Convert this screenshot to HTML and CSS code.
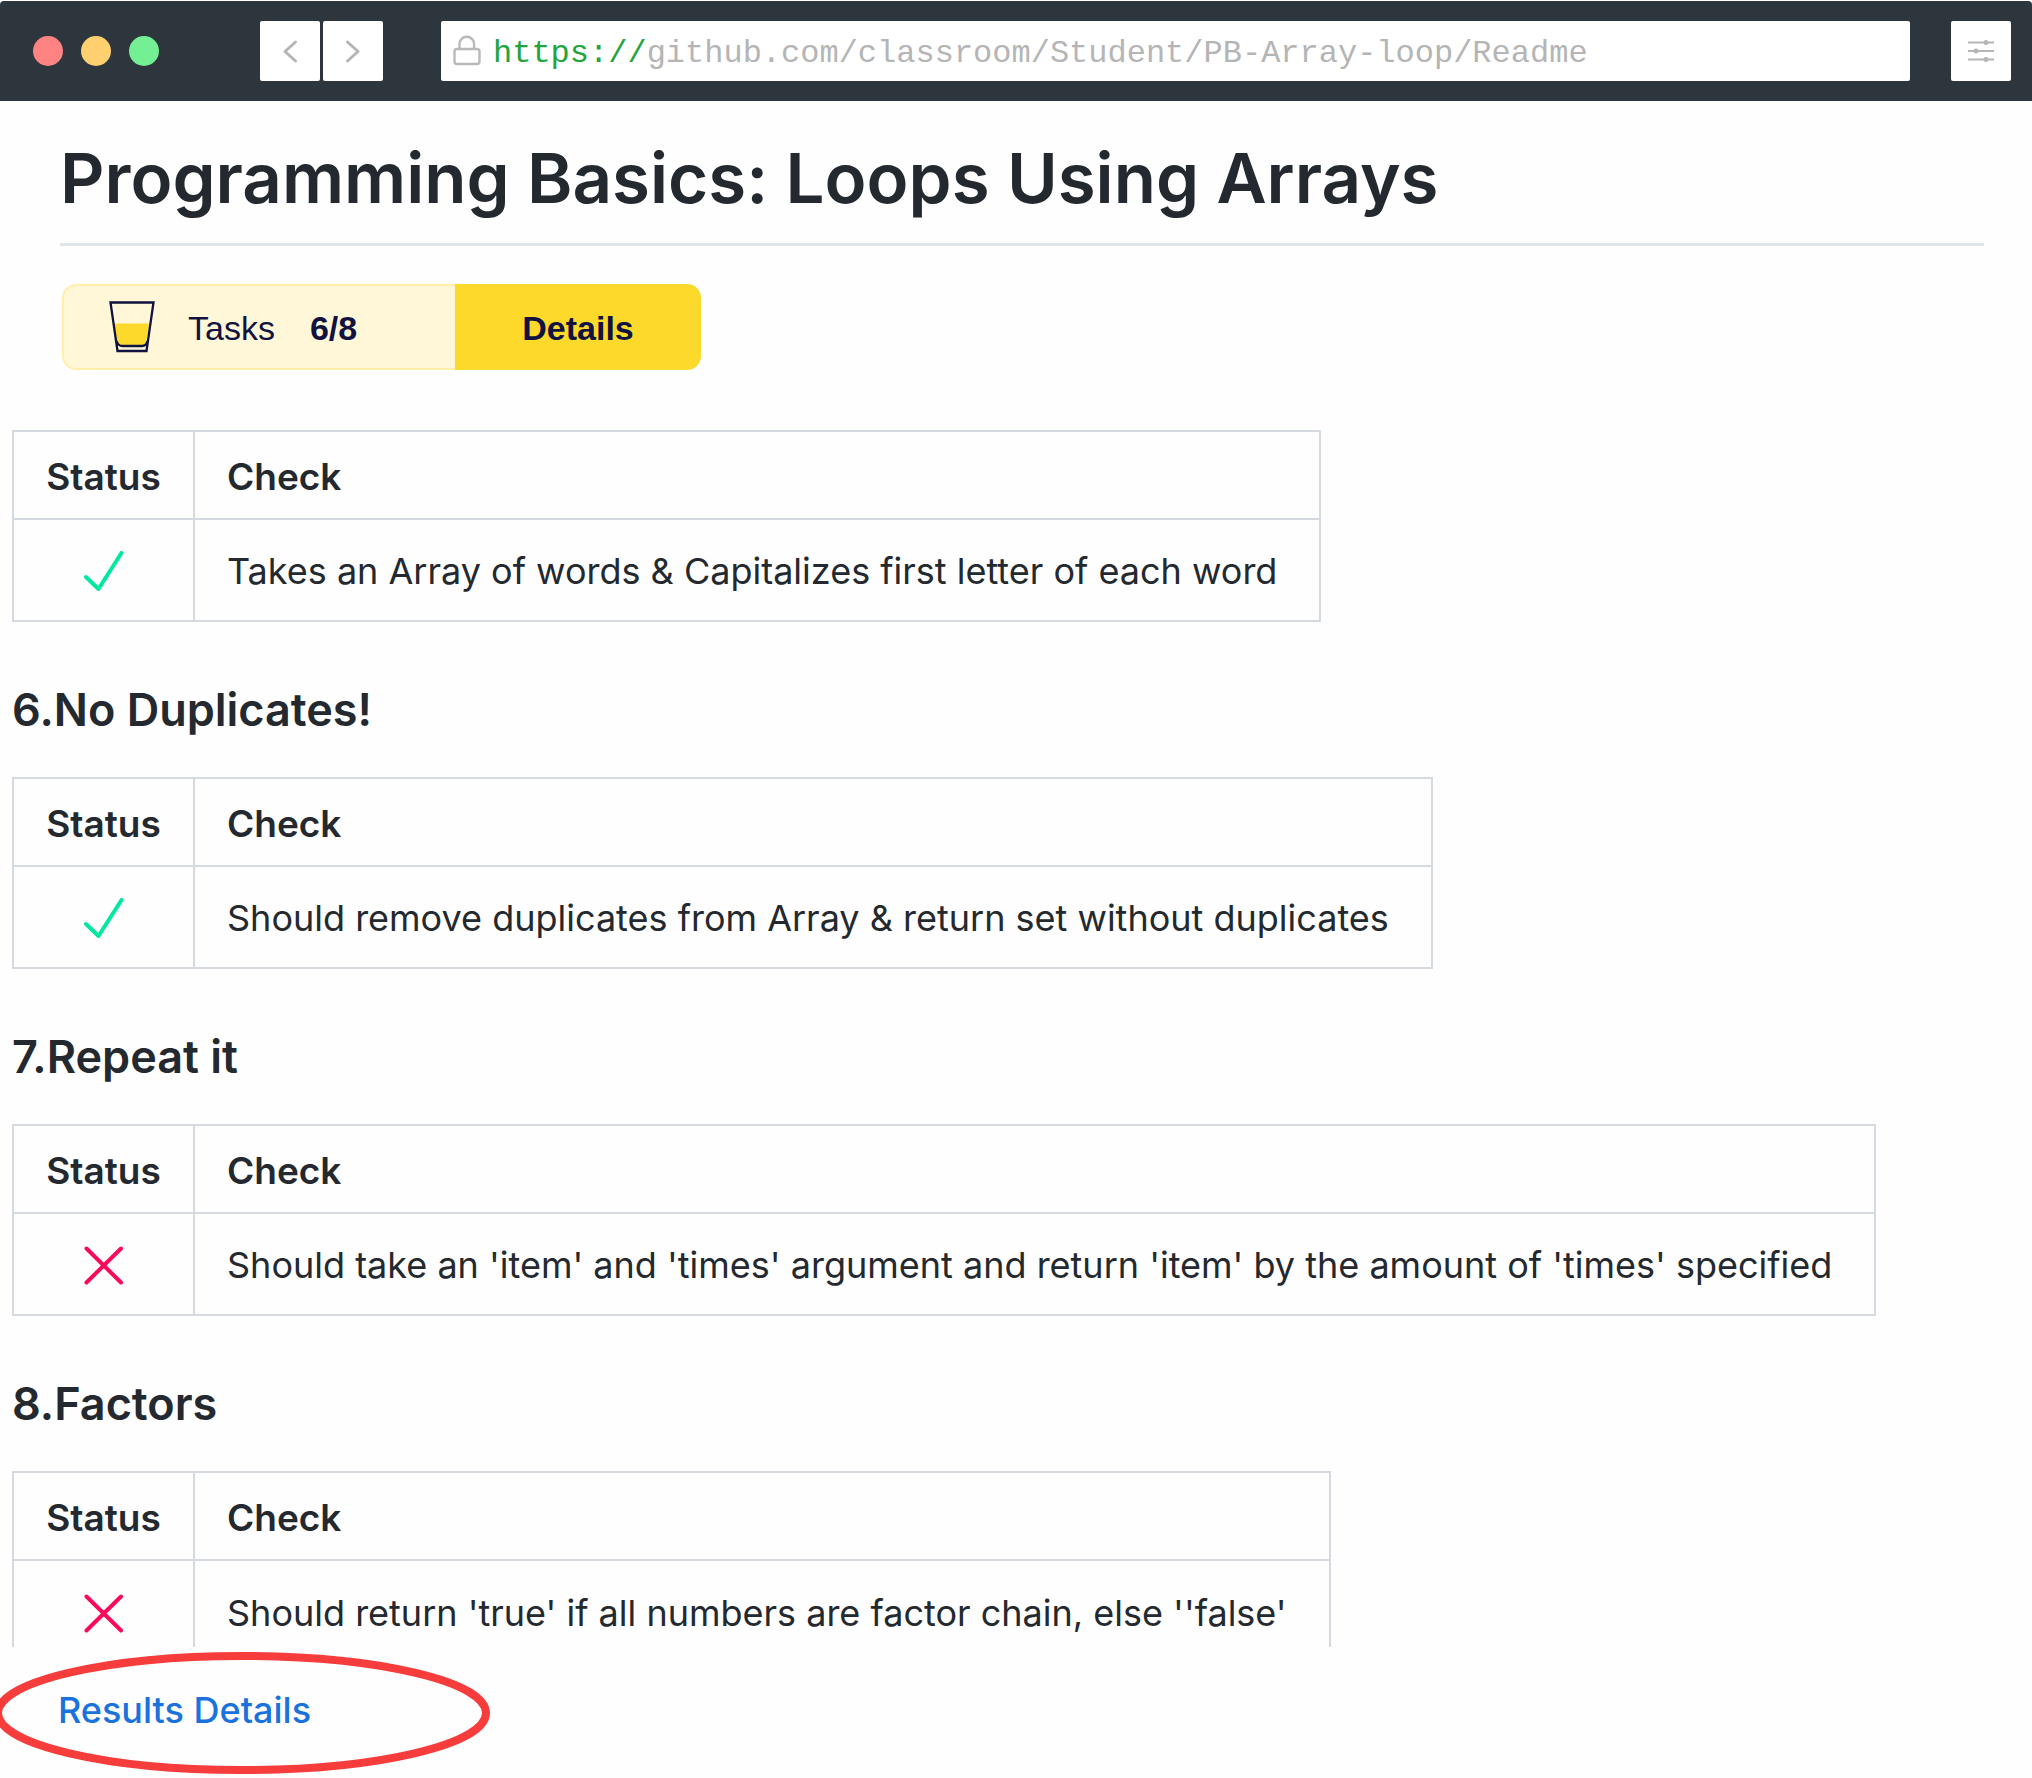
FILE: index.html
```html
<!DOCTYPE html>
<html lang="en">
<head>
<meta charset="utf-8">
<title>Programming Basics: Loops Using Arrays</title>
<link rel="stylesheet" href="styles.css">
</head>
<body>
<header class="toolbar">
  <div class="lights">
    <span class="light light-red"></span>
    <span class="light light-yellow"></span>
    <span class="light light-green"></span>
  </div>
  <nav class="history">
    <button class="tool-button" type="button" aria-label="Back">
      <svg width="60" height="60" viewBox="0 0 60 60"><path d="M35.500 21L25 30.500L35.500 40"/></svg>
    </button>
    <button class="tool-button" type="button" aria-label="Forward">
      <svg width="60" height="60" viewBox="0 0 60 60"><path d="M24.500 21L35 30.500L24.500 40"/></svg>
    </button>
  </nav>
  <div class="address">
    <svg class="lock" width="28" height="32" viewBox="0 0 28 32"><rect x="1.500" y="14" width="25" height="15" rx="2.500"/><path d="M6.500 14V9a7.300 7.300 0 0 1 14.600 0v5"/></svg>
    <label class="scheme" for="url">https://</label>
    <input class="url" id="url" type="text" value="github.com/classroom/Student/PB-Array-loop/Readme">
  </div>
  <button class="tool-button" type="button" aria-label="Settings">
    <svg width="60" height="60" viewBox="0 0 60 60"><path class="thin" d="M17 21.500H43M17 30H43M17 38.500H43"/><g class="knobs"><circle cx="35" cy="21.500" r="2.500"/><circle cx="25" cy="30" r="2.500"/><circle cx="35" cy="38.500" r="2.500"/></g></svg>
  </button>
</header>

<main>
  <div class="intro">
    <h1>Programming Basics: Loops Using Arrays</h1>
    <div class="badge">
      <div class="badge-tasks">
        <svg width="48" height="54" viewBox="0 0 48 54"><path d="M6 23.500H41.500L38 43q-1 4-5 4H15q-4 0-6-5Z" fill="#fcd92b"/><path d="M2.500 2.500H45.500L38.500 51H9.500ZM8.500 41q1.500 5 6 5H34q4.500 0 5.500-5" fill="none" stroke="#10123f" stroke-width="2.300"/></svg>
        <span>Tasks</span>
        <b>6/8</b>
      </div>
      <button class="badge-details" type="button">Details</button>
    </div>
  </div>

  <section>
    <table>
      <thead><tr><th>Status</th><th>Check</th></tr></thead>
      <tbody><tr>
        <td><svg class="mark pass" width="40" height="40" viewBox="0 0 40 40" role="img" aria-label="Passed"><path d="M2 26L14.500 38L37.500 2"/></svg></td>
        <td>Takes an Array of words &amp; Capitalizes first letter of each word</td>
      </tr></tbody>
    </table>
  </section>

  <section>
    <h2>6.No Duplicates!</h2>
    <table>
      <thead><tr><th>Status</th><th>Check</th></tr></thead>
      <tbody><tr>
        <td><svg class="mark pass" width="40" height="40" viewBox="0 0 40 40" role="img" aria-label="Passed"><path d="M2 26L14.500 38L37.500 2"/></svg></td>
        <td>Should remove duplicates from Array &amp; return set without duplicates</td>
      </tr></tbody>
    </table>
  </section>

  <section>
    <h2>7.Repeat it</h2>
    <table>
      <thead><tr><th>Status</th><th>Check</th></tr></thead>
      <tbody><tr>
        <td><svg class="mark fail" width="40" height="40" viewBox="0 0 40 40" role="img" aria-label="Failed"><path d="M2.500 3.500L37 37.500M37 3.500L2.500 37.500"/></svg></td>
        <td>Should take an 'item' and 'times' argument and return 'item' by the amount of 'times' specified</td>
      </tr></tbody>
    </table>
  </section>

  <section>
    <h2>8.Factors</h2>
    <table class="open-ended">
      <thead><tr><th>Status</th><th>Check</th></tr></thead>
      <tbody><tr>
        <td><svg class="mark fail" width="40" height="40" viewBox="0 0 40 40" role="img" aria-label="Failed"><path d="M2.500 3.500L37 37.500M37 3.500L2.500 37.500"/></svg></td>
        <td>Should return 'true' if all numbers are factor chain, else ''false'</td>
      </tr></tbody>
    </table>
  </section>

  <footer class="results">
    <a href="#results">Results Details</a>
    <svg class="ring" width="500" height="126" viewBox="0 0 500 126"><ellipse cx="250" cy="63" rx="244" ry="57"/></svg>
  </footer>
</main>
</body>
</html>
```

FILE: styles.css
```css
* { box-sizing: border-box; }

body {
  margin: 0;
  padding-top: 1px;
  background: #fefefe;
  color: #24292f;
  font-family: Inter, "Liberation Sans", sans-serif;
  font-size: 36px;
  overflow-x: hidden;
}

button, input { font: inherit; border: 0; padding: 0; }

/* browser bar */
.toolbar {
  display: flex;
  align-items: center;
  height: 100px;
  padding: 0 21px 0 33px;
  background: #2d363c;
  border-radius: 4px 4px 0 0;
}
.lights { display: flex; gap: 18px; margin-right: 101px; }
.light { width: 30px; height: 30px; border-radius: 50%; }
.light-red { background: #ff8383; }
.light-yellow { background: #ffcf70; }
.light-green { background: #75ef94; }

.history { display: flex; gap: 3px; margin-right: 58px; }
.tool-button {
  display: block;
  width: 60px;
  height: 60px;
  background: #fff;
  border-radius: 2px;
}
.tool-button svg {
  display: block;
  fill: none;
  stroke: #b5b5b5;
  stroke-width: 3;
  stroke-linecap: round;
  stroke-linejoin: round;
}
.tool-button .thin { stroke-width: 2; stroke-linecap: butt; }
.tool-button .knobs { fill: #b5b5b5; stroke: none; }

.address {
  display: flex;
  flex: 1;
  align-items: center;
  height: 60px;
  margin-right: 41px;
  padding-left: 12px;
  background: #fff;
  border-radius: 2px;
  font-family: "Courier New", "Liberation Mono", monospace;
  font-size: 32px;
}
.lock { margin-right: 12px; fill: none; stroke: #b9b9b9; stroke-width: 2.4; }
.scheme, .url { padding-top: 4px; }
.scheme { color: #23a43c; }
.url { flex: 1; min-width: 0; background: none; color: #b5b5b5; }

/* title and badge */
.intro { padding: 32px 48px 0 60px; }
h1 {
  margin: 0 0 38px;
  padding-bottom: 20px;
  border-bottom: 3px solid #dfe5e8;
  font-size: 69px;
  font-weight: 600;
  line-height: 90px;
}
.badge {
  display: flex;
  width: max-content;
  height: 86px;
  margin-left: 2px;
  border-radius: 14px;
  overflow: hidden;
  color: #10123f;
  font-family: "Liberation Sans", Arial, sans-serif;
  font-size: 34px;
}
.badge-tasks {
  display: flex;
  align-items: center;
  width: 393px;
  padding-left: 44px;
  background: #fff7d8;
  border: 2px solid #ffefa8;
  border-right: 0;
  border-radius: 14px 0 0 14px;
}
.badge-tasks span { margin: 0 35px 0 32px; }
.badge-tasks span, .badge-tasks b, .badge-details { padding-top: 2px; }
.badge-details { width: 246px; background: #fcd92b; color: inherit; font-weight: 700; }

/* check tables */
section { padding-left: 12px; }
.intro + section { padding-top: 60px; }
h2 {
  margin: 0;
  padding: 58px 0 37px;
  font-size: 45px;
  font-weight: 600;
  line-height: 60px;
}
table { border-collapse: separate; border-spacing: 0; border: solid #d4dae0; border-width: 2px 0 0 2px; }
th, td {
  padding: 2px 42px 0 32px;
  border: solid #d4dae0;
  border-width: 0 2px 2px 0;
  text-align: left;
  white-space: nowrap;
}
th { height: 88px; font-size: 37px; font-weight: 600; }
td { height: 102px; }
th:first-child, td:first-child { width: 181px; padding: 2px 0 0; text-align: center; }
.open-ended td, .open-ended td:first-child { height: 86px; padding-top: 18px; border-bottom: 0; }
.mark { display: block; margin: 0 auto; fill: none; stroke-width: 4; stroke-linecap: round; stroke-linejoin: round; }
.pass { stroke: #00e8a2; }
.fail { stroke: #f90b5c; }

/* circled link */
.results { position: relative; display: flex; height: 130px; padding: 30px 58px; }
.results a { color: #1a73dd; font-weight: 500; line-height: 66px; text-decoration: none; }
.ring { position: absolute; left: -8px; top: 3px; fill: none; stroke: #f73c3c; stroke-width: 8; pointer-events: none; }
```
